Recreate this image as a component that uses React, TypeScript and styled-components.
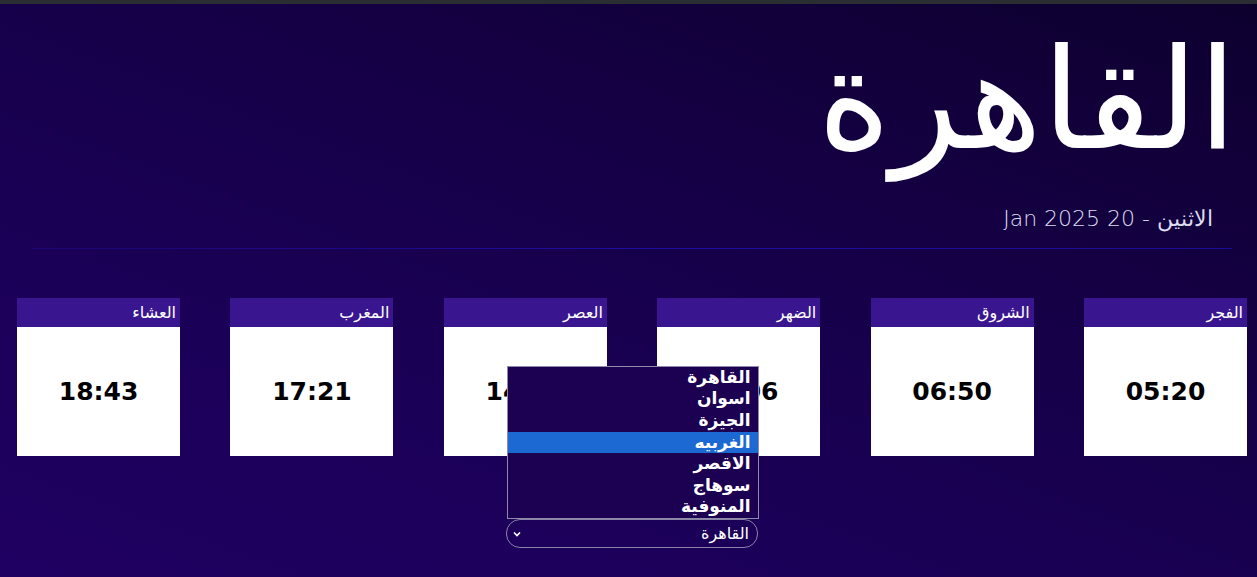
import React from "react";
import styled, { createGlobalStyle } from "styled-components";

const Global = createGlobalStyle`
  html, body { margin: 0; padding: 0; }
  body {
    font-family: "Noto Sans", "DejaVu Sans", sans-serif;
    background: #150046;
  }
`;

const Page = styled.div`
  width: 1257px;
  height: 577px;
  overflow: hidden;
  position: relative;
  background: linear-gradient(200deg, #0d002e 0%, #150045 35%, #1b0058 70%, #1f0062 100%);
  border-top: 4px solid #2a2d31;
  box-sizing: border-box;
  direction: rtl;
`;

const Header = styled.header`
  display: flex;
  flex-direction: column;
  align-items: flex-start;
  padding: 0 20px 0 0;
`;

const Title = styled.h1`
  margin: 0;
  height: 190px;
  font-family: "DejaVu Sans", sans-serif;
  font-weight: 400;
  font-size: 140px;
  line-height: 192px;
  color: #ffffff;
`;

const DateLine = styled.div`
  margin: 12px 24px 0 0;
  font-family: "DejaVu Sans", sans-serif;
  font-weight: 200;
  font-size: 22px;
  color: #dcdcf0;
`;

const Divider = styled.hr`
  margin: 17px 25px 0 32px;
  border: 0;
  height: 1px;
  background: linear-gradient(90deg, rgba(30, 10, 150, 0.45), #1e0ea0 50%, #1c0c94);
`;

const Row = styled.div`
  display: flex;
  justify-content: space-between;
  padding: 0 10px 0 17px;
  margin-top: 49px;
`;

const Card = styled.div`
  width: 163px;
  display: flex;
  flex-direction: column;
`;

const CardHead = styled.div`
  height: 29px;
  background: #3a1590;
  color: #ffffff;
  font-family: "DejaVu Sans", sans-serif;
  font-size: 16px;
  line-height: 29px;
  padding: 0 4px;
  text-align: right;
`;

const CardBody = styled.div`
  height: 129px;
  background: #ffffff;
  display: flex;
  align-items: center;
  justify-content: center;
  font-family: "DejaVu Sans", sans-serif;
  font-weight: 700;
  font-size: 25px;
  color: #000;
  direction: ltr;
`;

const SelectWrap = styled.div`
  position: relative;
  display: flex;
  justify-content: center;
  margin-top: 63px;
  padding-left: 7px;
`;

const SelectBox = styled.div`
  width: 252px;
  height: 29px;
  box-sizing: border-box;
  border: 1px solid #8a84a8;
  border-radius: 14px;
  display: flex;
  align-items: center;
  justify-content: space-between;
  padding: 0 8px 0 5px;
  color: #fff;
  font-family: "DejaVu Sans", sans-serif;
  font-size: 16px;
`;

const Chevron = styled.svg`
  width: 10px;
  height: 10px;
`;

const ListBox = styled.ul`
  position: absolute;
  bottom: 29px;
  left: 50%;
  margin: 0 0 0 -122px;
  width: 252px;
  box-sizing: border-box;
  list-style: none;
  padding: 0;
  background: #1c0052;
  border: 1px solid #8f8aa8;
  font-family: "DejaVu Sans", sans-serif;
  font-weight: 700;
`;

const Option = styled.li<{ $active?: boolean }>`
  height: 21.6px;
  line-height: 21.6px;
  font-size: 17px;
  padding: 0 7px;
  color: #fff;
  background: ${(p) => (p.$active ? "#1c69d3" : "transparent")};
`;

const prayers = [
  { name: "الفجر", time: "05:20" },
  { name: "الشروق", time: "06:50" },
  { name: "الضهر", time: "12:06" },
  { name: "العصر", time: "14:53" },
  { name: "المغرب", time: "17:21" },
  { name: "العشاء", time: "18:43" },
];

const cities = ["القاهرة", "اسوان", "الجيزة", "الغربيه", "الاقصر", "سوهاج", "المنوفية"];

export default function App() {
  return (
    <>
      <Global />
      <Page>
        <Header>
          <Title>القاهرة</Title>
          <DateLine>الاثنين - 20 Jan 2025</DateLine>
        </Header>
        <Divider />
        <Row>
          {prayers.map((p) => (
            <Card key={p.name}>
              <CardHead>{p.name}</CardHead>
              <CardBody>{p.time}</CardBody>
            </Card>
          ))}
        </Row>
        <SelectWrap>
          <ListBox>
            {cities.map((c) => (
              <Option key={c} $active={c === "الغربيه"}>
                {c}
              </Option>
            ))}
          </ListBox>
          <SelectBox>
            <span>القاهرة</span>
            <Chevron viewBox="0 0 10 10">
              <path d="M2 3.5 L5 6.5 L8 3.5" stroke="#fff" strokeWidth="1.6" fill="none" />
            </Chevron>
          </SelectBox>
        </SelectWrap>
      </Page>
    </>
  );
}
